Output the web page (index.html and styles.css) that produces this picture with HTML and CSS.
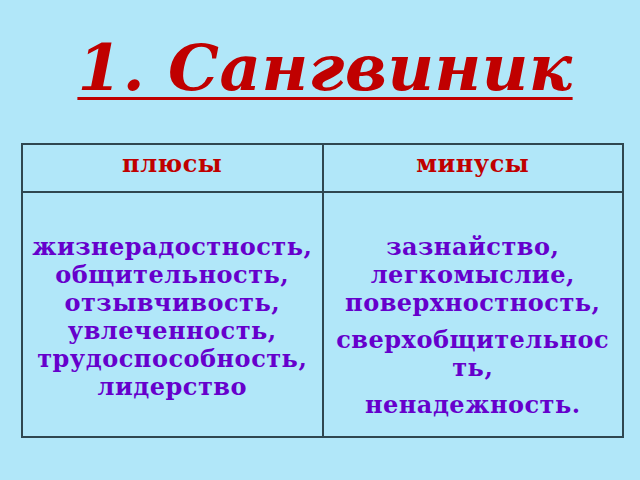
FILE: index.html
```html
<!DOCTYPE html>
<html lang="ru">
<head>
<meta charset="utf-8">
<link rel="stylesheet" href="styles.css">
</head>
<body>
<div class="slide">
  <h1 class="title">1. Сангвиник</h1>
  <table class="grid">
    <tr class="head">
      <th>плюсы</th>
      <th>минусы</th>
    </tr>
    <tr class="body">
      <td>
        <p>жизнерадостность, общительность, отзывчивость, увлеченность, трудоспособность, лидерство</p>
      </td>
      <td>
        <p>зазнайство, легкомыслие, поверхностность,</p>
        <p>сверхобщительность,</p>
        <p>ненадежность.</p>
      </td>
    </tr>
  </table>
</div>
</body>
</html>
```

FILE: styles.css
```css
html, body {
  margin: 0;
  padding: 0;
  background: #b1e7f9;
}
.slide {
  width: 640px;
  height: 480px;
  box-sizing: border-box;
  padding-top: 30px;
  font-family: "DejaVu Serif", serif;
  display: flex;
  flex-direction: column;
  align-items: center;
}
.title {
  margin: 0 0 0 10px;
  font-size: 64px;
  font-weight: bold;
  font-style: italic;
  letter-spacing: 0.5px;
  color: #c00000;
  line-height: 76px;
  text-decoration: underline;
  text-decoration-thickness: 3px;
  text-underline-offset: 7px;
}
.grid {
  align-self: flex-start;
  margin: 37px 0 0 21px;
  width: 603px;
  border-collapse: collapse;
  table-layout: fixed;
}
.grid th, .grid td {
  border: 2px solid #2f4750;
  width: 50%;
  text-align: center;
  vertical-align: top;
  font-weight: bold;
  letter-spacing: 0.5px;
}
.head th {
  height: 48px;
  padding: 5px 4px 0;
  box-sizing: border-box;
  font-size: 24px;
  line-height: 28px;
  color: #c00000;
}
.body td {
  height: 245px;
  padding: 40px 8px 0;
  box-sizing: border-box;
  font-size: 24px;
  line-height: 28px;
  color: #6600cc;
  overflow-wrap: anywhere;
}
.body p {
  margin: 0 0 9px;
}
```
